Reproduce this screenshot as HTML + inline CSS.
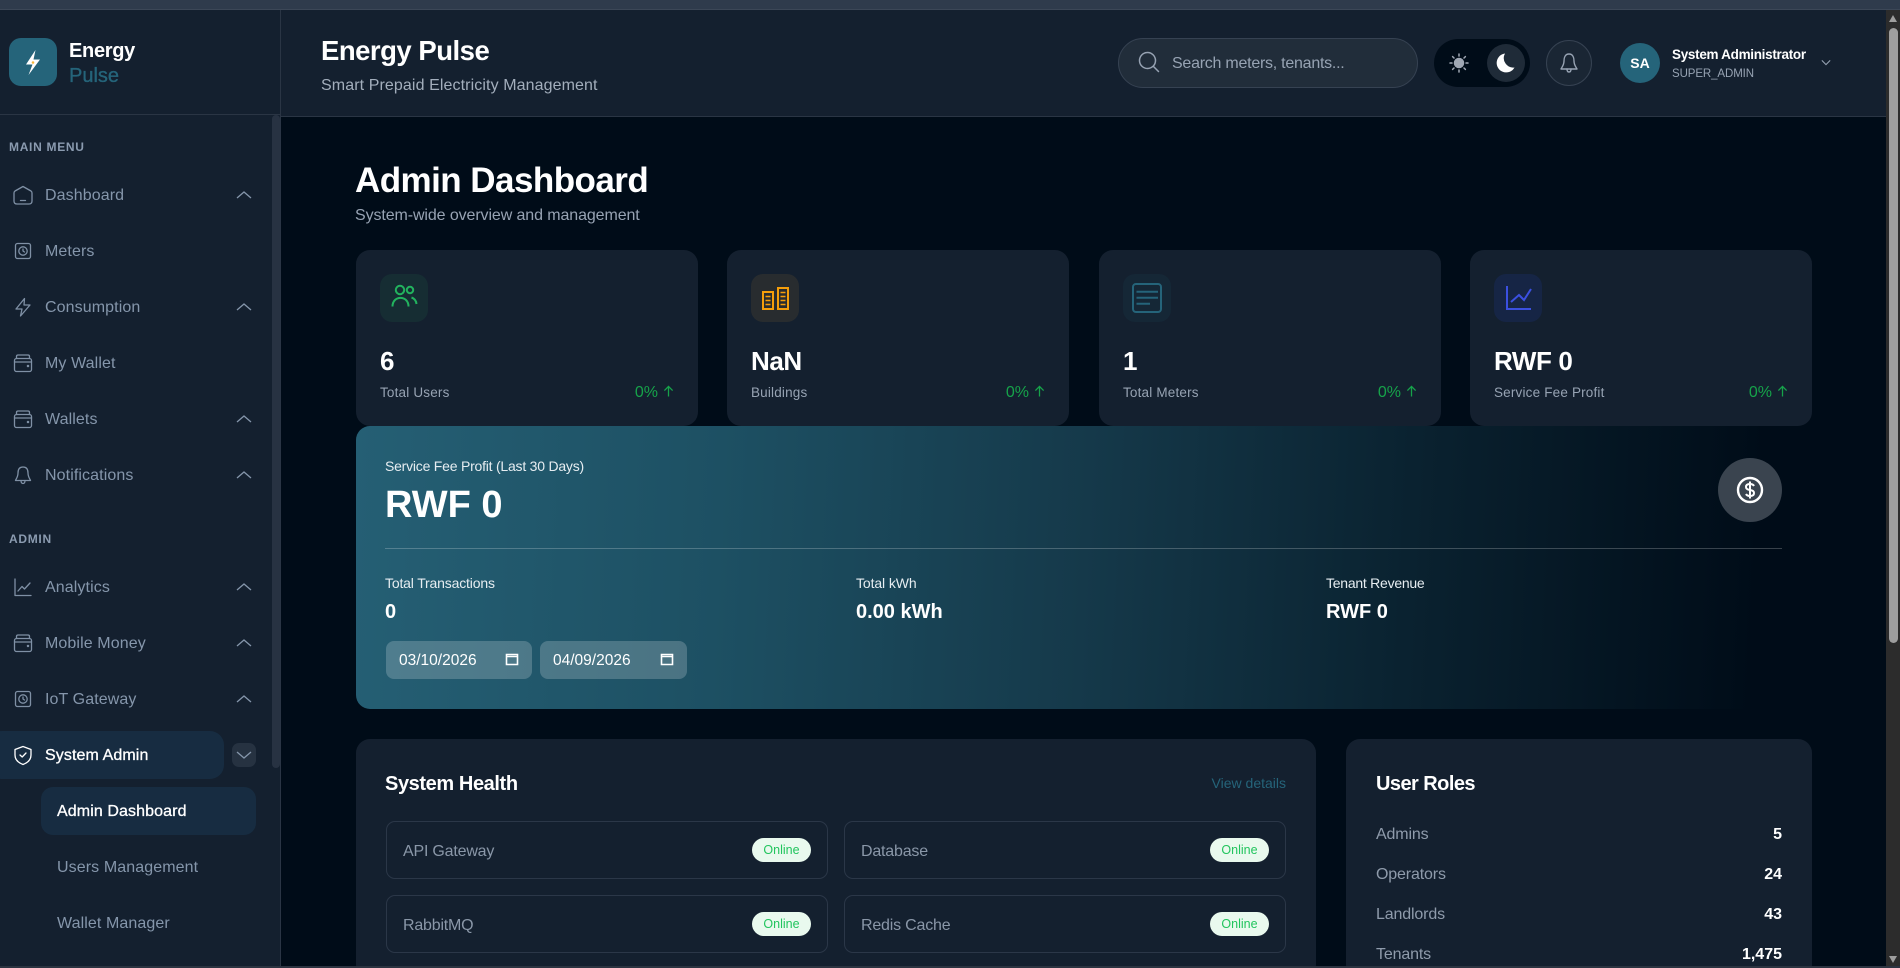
<!DOCTYPE html>
<html><head><meta charset="utf-8"><title>Energy Pulse</title>
<style>
*{box-sizing:border-box;margin:0;padding:0}
html,body{width:1900px;height:968px;overflow:hidden;background:#000c18;font-family:"Liberation Sans",sans-serif}
#r{position:relative;width:1900px;height:968px;overflow:hidden;background:#000c18}
.a{position:absolute}
.t{position:absolute;white-space:nowrap;line-height:30px;height:30px}
.m{font-size:16px;color:#8596ab;left:45px;letter-spacing:.1px;margin-top:1px}
.sec{font-size:12px;font-weight:bold;color:#8b9bb0;left:9px;letter-spacing:.7px;margin-top:1px}
.ic{position:absolute;left:12px;width:22px;height:22px;fill:none;stroke:#7f90a5;stroke-width:1.3;stroke-linecap:round;stroke-linejoin:round}
.ch{position:absolute;left:236px;width:16px;height:10px;fill:none;stroke:#8596ab;stroke-width:1.3}
.card{position:absolute;top:250px;width:342px;height:176px;background:#14202f;border-radius:14px}
.box{position:absolute;left:24px;top:24px;width:48px;height:48px;border-radius:12px}
.box svg{position:absolute;left:0;top:0;width:48px;height:48px;fill:none;stroke-width:2}
.val{position:absolute;left:24px;top:96px;font-size:26px;font-weight:bold;color:#fff;line-height:30px;white-space:nowrap;letter-spacing:-.4px}
.lab{position:absolute;left:24px;top:128px;font-size:13.5px;color:#97a3b3;line-height:30px;white-space:nowrap;letter-spacing:.18px}
.pct{position:absolute;right:24px;top:128px;font-size:16px;color:#16a34a;line-height:30px;white-space:nowrap}
.pct svg{width:11px;height:14px;vertical-align:-1px;margin-left:5px;fill:none;stroke:#16a34a;stroke-width:1.4}
.row{position:absolute;width:442px;height:58px;border:1.3px solid #2b3748;border-radius:9px}
.row span{position:absolute;left:16px;top:15px;font-size:16px;line-height:30px;color:#8a97a8;white-space:nowrap;letter-spacing:-.2px}
.row b{position:absolute;right:16px;top:16px;width:59px;height:24px;border-radius:12px;background:#e9f9ee;color:#22c55e;font-size:12.5px;font-weight:normal;line-height:24px;text-align:center}
.rl{font-size:16px;color:#8f9bab;left:1376px;letter-spacing:-.15px}
.rv{font-size:16px;color:#fff;font-weight:bold;right:118px}
.d{position:absolute;top:641px;height:38px;background:rgba(255,255,255,.2);border-radius:8px;color:#fff;font-size:15.5px;line-height:39px;padding-left:13px}
.d svg{position:absolute;top:11px;right:13px;width:14px;height:14px;fill:none;stroke:#fff;stroke-width:1.6}
.act{color:#fff;-webkit-text-stroke:.3px #fff}
</style></head><body><div id="r">

<!-- browser top strip -->
<div class="a" style="left:0;top:0;width:1900px;height:10px;background:#2f3b4c;border-bottom:1px solid #3c4757"></div>

<!-- sidebar -->
<div class="a" style="left:0;top:10px;width:281px;height:956px;background:#14202f;border-right:1px solid #2a3544"></div>
<div class="a" style="left:0;top:114px;width:280px;height:1px;background:#2a3544"></div>
<div class="a" style="left:272px;top:115px;width:8px;height:653px;background:#273242;border-radius:4px"></div>

<div class="a" style="left:9px;top:38px;width:48px;height:48px;border-radius:12px;background:#25647a"></div>
<svg class="a" style="left:23px;top:47px;width:20px;height:30px" viewBox="0 0 20 30"><path d="M12.5 3 L3 17.5 H9.5 L5.5 28 L17 12.5 H10.5 Z" fill="#fff"/><circle cx="10" cy="15.5" r="1.3" fill="#f6b73c"/></svg>
<div class="t" style="left:69px;top:36px;font-size:20px;font-weight:bold;color:#fff;letter-spacing:-.3px">Energy</div>
<div class="t" style="left:69px;top:61px;font-size:20px;color:#25647a;-webkit-text-stroke:.35px #25647a">Pulse</div>

<div class="t sec" style="top:131px">MAIN MENU</div>

<svg class="ic" style="top:184px" viewBox="0 0 22 22"><path d="M11 2.5 L19 7 Q20 7.6 20 9 V17 Q20 20 17 20 H5 Q2 20 2 17 V9 Q2 7.6 3 7 Z"/><path d="M8.5 16.5 H13.5"/></svg>
<div class="t m" style="top:180px">Dashboard</div>
<svg class="ch" style="top:190px" viewBox="0 0 16 10"><path d="M1 8 L8 2 L15 8"/></svg>

<svg class="ic" style="top:240px" viewBox="0 0 22 22"><rect x="3.5" y="3.5" width="15" height="15" rx="2"/><circle cx="11" cy="11" r="4.2"/><path d="M11 9 V11 L12.5 12"/></svg>
<div class="t m" style="top:236px">Meters</div>

<svg class="ic" style="top:296px" viewBox="0 0 22 22"><path d="M12.5 2.5 L4 13 H10 L8.5 20 L18 9 H12 Z"/></svg>
<div class="t m" style="top:292px">Consumption</div>
<svg class="ch" style="top:302px" viewBox="0 0 16 10"><path d="M1 8 L8 2 L15 8"/></svg>

<svg class="ic" style="top:352px" viewBox="0 0 22 22"><rect x="2.5" y="6.5" width="17" height="13" rx="2"/><path d="M4.5 6.5 V4.5 Q4.5 3 6 3 H16 Q17.5 3 17.5 4.5 V6.5 M2.5 10 H19.5"/><circle cx="16" cy="14" r=".6"/></svg>
<div class="t m" style="top:348px">My Wallet</div>

<svg class="ic" style="top:408px" viewBox="0 0 22 22"><rect x="2.5" y="6.5" width="17" height="13" rx="2"/><path d="M4.5 6.5 V4.5 Q4.5 3 6 3 H16 Q17.5 3 17.5 4.5 V6.5 M2.5 10 H19.5"/><circle cx="16" cy="14" r=".6"/></svg>
<div class="t m" style="top:404px">Wallets</div>
<svg class="ch" style="top:414px" viewBox="0 0 16 10"><path d="M1 8 L8 2 L15 8"/></svg>

<svg class="ic" style="top:464px" viewBox="0 0 22 22"><path d="M11 3 C7 3 6 6 6 9 C6 13 4 15 3.5 16.5 H18.5 C18 15 16 13 16 9 C16 6 15 3 11 3 Z"/><path d="M9 16.5 Q9 19.5 11 19.5 Q13 19.5 13 16.5"/></svg>
<div class="t m" style="top:460px">Notifications</div>
<svg class="ch" style="top:470px" viewBox="0 0 16 10"><path d="M1 8 L8 2 L15 8"/></svg>

<div class="t sec" style="top:523px">ADMIN</div>

<svg class="ic" style="top:576px" viewBox="0 0 22 22"><path d="M3 3 V19.5 H19"/><path d="M6 15 L10 10.5 L12.5 13 L18 7"/></svg>
<div class="t m" style="top:572px">Analytics</div>
<svg class="ch" style="top:582px" viewBox="0 0 16 10"><path d="M1 8 L8 2 L15 8"/></svg>

<svg class="ic" style="top:632px" viewBox="0 0 22 22"><rect x="2.5" y="6.5" width="17" height="13" rx="2"/><path d="M4.5 6.5 V4.5 Q4.5 3 6 3 H16 Q17.5 3 17.5 4.5 V6.5 M2.5 10 H19.5"/><circle cx="16" cy="14" r=".6"/></svg>
<div class="t m" style="top:628px">Mobile Money</div>
<svg class="ch" style="top:638px" viewBox="0 0 16 10"><path d="M1 8 L8 2 L15 8"/></svg>

<svg class="ic" style="top:688px" viewBox="0 0 22 22"><rect x="3.5" y="3.5" width="15" height="15" rx="2"/><circle cx="11" cy="11" r="4.2"/><path d="M11 9 V11 L12.5 12"/></svg>
<div class="t m" style="top:684px">IoT Gateway</div>
<svg class="ch" style="top:694px" viewBox="0 0 16 10"><path d="M1 8 L8 2 L15 8"/></svg>

<div class="a" style="left:-12px;top:731px;width:236px;height:48px;background:#172c41;border-radius:14px"></div>
<svg class="ic" style="top:744px;stroke:#fff" viewBox="0 0 22 22"><path d="M11 2.5 L19 5.5 V11 C19 16 15 19 11 20.5 C7 19 3 16 3 11 V5.5 Z"/><path d="M8 11 L10.2 13 L14 9"/></svg>
<div class="t m act" style="top:740px">System Admin</div>
<div class="a" style="left:232px;top:743px;width:24px;height:24px;background:#263241;border-radius:7px"></div>
<svg class="ch" style="top:750px" viewBox="0 0 16 10"><path d="M1 2 L8 8 L15 2"/></svg>

<div class="a" style="left:41px;top:787px;width:215px;height:48px;background:#172c41;border-radius:12px"></div>
<div class="t m act" style="left:57px;top:796px">Admin Dashboard</div>
<div class="t m" style="left:57px;top:852px">Users Management</div>
<div class="t m" style="left:57px;top:908px">Wallet Manager</div>

<!-- top header -->
<div class="a" style="left:281px;top:10px;width:1605px;height:107px;background:#14202f;border-bottom:1px solid #2a3544"></div>
<div class="t" style="left:321px;top:36px;font-size:27.5px;font-weight:bold;color:#fff;letter-spacing:-.5px">Energy Pulse</div>
<div class="t" style="left:321px;top:71px;font-size:16px;color:#a3aebc;letter-spacing:.1px">Smart Prepaid Electricity Management</div>

<div class="a" style="left:1118px;top:38px;width:300px;height:50px;background:#212d3a;border:1px solid #364252;border-radius:25px"></div>
<svg class="a" style="left:1137px;top:50px;width:24px;height:24px;fill:none;stroke:#97a3b3;stroke-width:1.5;stroke-linecap:round" viewBox="0 0 24 24"><circle cx="10.5" cy="10.5" r="8"/><path d="M16.5 16.5 L21.5 21.5"/></svg>
<div class="t" style="left:1172px;top:49px;font-size:16px;color:#97a3b3;letter-spacing:-.25px">Search meters, tenants...</div>

<div class="a" style="left:1434px;top:39px;width:96px;height:48px;background:#000c18;border-radius:24px"></div>
<svg class="a" style="left:1449px;top:53px;width:20px;height:20px;stroke:#a0a8b4;stroke-width:1.5;stroke-linecap:round;fill:#a0a8b4" viewBox="0 0 20 20"><circle cx="10" cy="10" r="4.5"/><path d="M10 1 V3 M10 17 V19 M1 10 H3 M17 10 H19 M3.6 3.6 L5 5 M15 15 L16.4 16.4 M3.6 16.4 L5 15 M15 5 L16.4 3.6"/></svg>
<div class="a" style="left:1487px;top:44px;width:38px;height:38px;background:#1f2b38;border-radius:50%"></div>
<svg class="a" style="left:1494px;top:52px;width:22px;height:22px;fill:#fff" viewBox="0 0 22 22"><path d="M11 1.5 A9.5 9.5 0 1 0 20.5 15.5 A9.5 9.5 0 0 1 11 1.5 Z"/></svg>

<div class="a" style="left:1546px;top:40px;width:46px;height:46px;background:#1a2634;border:1px solid #364252;border-radius:50%"></div>
<svg class="a" style="left:1558px;top:51px;width:22px;height:24px;fill:none;stroke:#97a3b3;stroke-width:1.4;stroke-linecap:round;stroke-linejoin:round" viewBox="0 0 22 24"><path d="M11 3 C7 3 6 7 6 10 C6 14 4 16 3 18 H19 C18 16 16 14 16 10 C16 7 15 3 11 3 Z"/><path d="M9 18 Q9 21 11 21 Q13 21 13 18"/></svg>

<div class="a" style="left:1620px;top:43px;width:40px;height:40px;background:#25647a;border-radius:50%;color:#fff;font-size:14px;font-weight:bold;line-height:40px;text-align:center">SA</div>
<div class="t" style="left:1672px;top:40px;font-size:13.5px;font-weight:bold;color:#fff;letter-spacing:-.3px">System Administrator</div>
<div class="t" style="left:1672px;top:59px;font-size:11.5px;color:#97a3b3;letter-spacing:-.1px">SUPER_ADMIN</div>
<svg class="a" style="left:1821px;top:59px;width:10px;height:7px;fill:none;stroke:#97a3b3;stroke-width:1.3" viewBox="0 0 12 8"><path d="M1 1.5 L6 6.5 L11 1.5"/></svg>

<!-- page title -->
<div class="t" style="left:355px;top:166px;font-size:35px;font-weight:bold;color:#fff;letter-spacing:-.55px">Admin Dashboard</div>
<div class="t" style="left:355px;top:201px;font-size:16px;color:#97a3b3;letter-spacing:-.1px">System-wide overview and management</div>

<!-- stat cards -->
<div class="card" style="left:356px">
  <div class="box" style="background:#162d33"><svg viewBox="0 0 48 48" stroke="#22b35e" stroke-linecap="butt"><circle cx="20" cy="16" r="4.2"/><circle cx="30" cy="16" r="3.2"/><path d="M12.5 32.5 C12.5 21 28.5 21 28.5 32.5"/><path d="M31.5 23.5 Q36 25 36.5 30"/></svg></div>
  <div class="val">6</div><div class="lab">Total Users</div>
  <div class="pct">0%<svg viewBox="0 0 12 14"><path d="M6 13 V2 M1.5 6.5 L6 2 L10.5 6.5"/></svg></div>
</div>
<div class="card" style="left:727px">
  <div class="box" style="background:#282c2f"><svg viewBox="0 0 48 48" stroke="#f59e0b"><rect x="12" y="18" width="10" height="17"/><rect x="27" y="14" width="10" height="21"/><path d="M14.5 22.5 H19.5 M14.5 26.5 H19.5 M14.5 30.5 H19.5 M29.5 18.5 H34.5 M29.5 22.5 H34.5 M29.5 26.5 H34.5 M29.5 30.5 H34.5" stroke-width="1.6"/></svg></div>
  <div class="val">NaN</div><div class="lab">Buildings</div>
  <div class="pct">0%<svg viewBox="0 0 12 14"><path d="M6 13 V2 M1.5 6.5 L6 2 L10.5 6.5"/></svg></div>
</div>
<div class="card" style="left:1099px">
  <div class="box" style="background:#152736"><svg viewBox="0 0 48 48" stroke="#25647a"><rect x="10" y="10" width="28" height="28" rx="3"/><path d="M13.5 17.7 H35 M13.5 23.7 H35 M13.5 29.7 H27"/></svg></div>
  <div class="val">1</div><div class="lab">Total Meters</div>
  <div class="pct">0%<svg viewBox="0 0 12 14"><path d="M6 13 V2 M1.5 6.5 L6 2 L10.5 6.5"/></svg></div>
</div>
<div class="card" style="left:1470px">
  <div class="box" style="background:#162545"><svg viewBox="0 0 48 48" stroke="#3b50e0"><path d="M13 12 V35 H37"/><path d="M17 28 L25 21 L30 26 L37 15"/></svg></div>
  <div class="val">RWF 0</div><div class="lab">Service Fee Profit</div>
  <div class="pct">0%<svg viewBox="0 0 12 14"><path d="M6 13 V2 M1.5 6.5 L6 2 L10.5 6.5"/></svg></div>
</div>

<!-- hero -->
<div class="a" style="left:356px;top:426px;width:1456px;height:283px;border-radius:14px;background:linear-gradient(93deg,#255f74 0%,#1d5063 25%,#15394a 50%,#0a2230 72%,#000c18 96%)"></div>
<div class="t" style="left:385px;top:451px;font-size:14px;color:#e6edf1;letter-spacing:-.22px">Service Fee Profit (Last 30 Days)</div>
<div class="t" style="left:385px;top:490px;font-size:38px;font-weight:bold;color:#fff">RWF 0</div>
<div class="a" style="left:1718px;top:458px;width:64px;height:64px;border-radius:50%;background:#3a444f"></div>
<svg class="a" style="left:1736px;top:476px;width:28px;height:28px;fill:none;stroke:#fff;stroke-width:2.4" viewBox="0 0 28 28"><circle cx="14" cy="14" r="12"/><path d="M18 10 Q17 8 14 8 Q10 8 10 11 Q10 13.5 14 14 Q18 14.5 18 17 Q18 20 14 20 Q11 20 10 18 M14 5.5 V22.5" stroke-width="2"/></svg>
<div class="a" style="left:385px;top:548px;width:1397px;height:1px;background:rgba(255,255,255,.22)"></div>

<div class="t" style="left:385px;top:568px;font-size:14px;color:#e6edf1;letter-spacing:-.17px">Total Transactions</div>
<div class="t" style="left:385px;top:597px;font-size:20px;font-weight:bold;color:#fff">0</div>
<div class="t" style="left:856px;top:568px;font-size:14px;color:#e6edf1;letter-spacing:-.1px">Total kWh</div>
<div class="t" style="left:856px;top:597px;font-size:20px;font-weight:bold;color:#fff">0.00 kWh</div>
<div class="t" style="left:1326px;top:568px;font-size:14px;color:#e6edf1;letter-spacing:-.25px">Tenant Revenue</div>
<div class="t" style="left:1326px;top:597px;font-size:20px;font-weight:bold;color:#fff">RWF 0</div>

<div class="d" style="left:386px;width:146px">03/10/2026<svg viewBox="0 0 14 14"><path d="M1.5 2.5 H12.5 V12.5 H1.5 Z M1.5 4.5 H12.5"/></svg></div>
<div class="d" style="left:540px;width:147px">04/09/2026<svg viewBox="0 0 14 14"><path d="M1.5 2.5 H12.5 V12.5 H1.5 Z M1.5 4.5 H12.5"/></svg></div>

<!-- system health -->
<div class="a" style="left:356px;top:739px;width:960px;height:240px;background:#14202f;border-radius:14px"></div>
<div class="t" style="left:385px;top:769px;font-size:20px;font-weight:bold;color:#fff;letter-spacing:-.4px">System Health</div>
<div class="t" style="right:614px;top:768px;font-size:14px;color:#25647a">View details</div>
<div class="row" style="left:386px;top:821px"><span>API Gateway</span><b>Online</b></div>
<div class="row" style="left:844px;top:821px"><span>Database</span><b>Online</b></div>
<div class="row" style="left:386px;top:895px"><span>RabbitMQ</span><b>Online</b></div>
<div class="row" style="left:844px;top:895px"><span>Redis Cache</span><b>Online</b></div>

<!-- user roles -->
<div class="a" style="left:1346px;top:739px;width:466px;height:240px;background:#14202f;border-radius:14px"></div>
<div class="t" style="left:1376px;top:769px;font-size:20px;font-weight:bold;color:#fff;letter-spacing:-.55px">User Roles</div>
<div class="t rl" style="top:820px">Admins</div><div class="t rv" style="top:820px">5</div>
<div class="t rl" style="top:860px">Operators</div><div class="t rv" style="top:860px">24</div>
<div class="t rl" style="top:900px">Landlords</div><div class="t rv" style="top:900px">43</div>
<div class="t rl" style="top:940px">Tenants</div><div class="t rv" style="top:940px">1,475</div>

<!-- browser scrollbar -->
<div class="a" style="left:1886px;top:10px;width:14px;height:958px;background:#2c2c2c"></div>
<div class="a" style="left:1889px;top:28px;width:9px;height:615px;background:#9e9e9e;border-radius:5px"></div>
<div class="a" style="left:1889px;top:15px;width:0;height:0;border-left:4.5px solid transparent;border-right:4.5px solid transparent;border-bottom:7px solid #9e9e9e"></div>
<div class="a" style="left:1889px;top:956px;width:0;height:0;border-left:4.5px solid transparent;border-right:4.5px solid transparent;border-top:7px solid #9e9e9e"></div>
<div class="a" style="left:0;top:966px;width:1900px;height:2px;background:#2c3441"></div>
</div></body></html>
